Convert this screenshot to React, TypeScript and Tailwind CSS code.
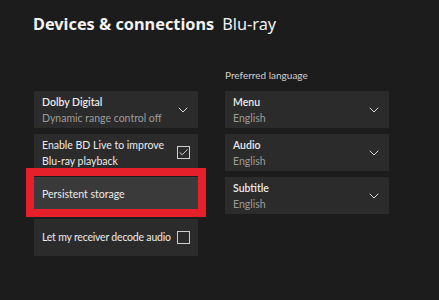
import { ChevronDown, Check } from 'lucide-react';

const font = { fontFamily: '"Noto Sans", "Open Sans", sans-serif' };
const body = { fontFamily: 'Lato, "Noto Sans", sans-serif' };

function Chevron() {
  return <ChevronDown className="h-4 w-4 text-[#d8d8d8]" strokeWidth={1.5} />;
}

function Box({ checked }: { checked: boolean }) {
  return (
    <div className="flex h-[13px] w-[13px] items-center justify-center border border-[#cfcfcf]">
      {checked && <Check className="h-[11px] w-[11px] text-[#e0e0e0]" strokeWidth={2} />}
    </div>
  );
}

function Select({ label, value }: { label: string; value: string }) {
  return (
    <div className="flex h-[37px] items-center justify-between bg-[#2b2b2b] pl-2 pr-[7px]">
      <div className="flex flex-col leading-[16px]">
        <span className="text-[10.5px] font-semibold text-[#ececec]">{label}</span>
        <span className="text-[10.5px] text-[#9c9c9c]">{value}</span>
      </div>
      <Chevron />
    </div>
  );
}

export default function App() {
  return (
    <div className="relative h-[300px] w-[439px] overflow-hidden bg-[#1c1c1c]" style={body}>
      <div
        className="flex items-baseline gap-[8px] pl-[33px] pt-[12px] text-[16.3px] leading-[24px] text-[#f2f2f2]"
        style={font}
      >
        <span className="font-bold">Devices &amp; connections</span>
        <span className="font-normal">Blu-ray</span>
      </div>

      <div className="mt-[55px] flex pl-[34px]">
        {/* left column */}
        <div className="flex w-[164px] flex-col gap-[6px]">
          <Select label="Dolby Digital" value="Dynamic range control off" />
          <div className="flex h-[37px] items-center justify-between bg-[#2b2b2b] pl-2 pr-[8px]">
            <span className="text-[10.5px] leading-[16px] text-[#ececec]">
              Enable BD Live to improve
              <br />
              Blu-ray playback
            </span>
            <Box checked />
          </div>
          <div className="flex h-[36px] items-center bg-[#3a3a3a] pl-2">
            <span className="text-[10.5px] text-[#ececec]">Persistent storage</span>
          </div>
          <div className="flex h-[37px] items-center justify-between bg-[#2b2b2b] pl-2 pr-[8px]">
            <span className="whitespace-nowrap text-[10.5px] tracking-[-0.2px] text-[#ececec]">
              Let my receiver decode audio
            </span>
            <Box checked={false} />
          </div>
        </div>

        {/* right column */}
        <div className="ml-[27px] w-[164px]">
          <div className="-mt-[23px] mb-[8px] text-[10px] leading-[15px] text-[#d0d0d0]">
            Preferred language
          </div>
          <div className="flex flex-col gap-[6px]">
            <Select label="Menu" value="English" />
            <Select label="Audio" value="English" />
            <Select label="Subtitle" value="English" />
          </div>
        </div>
      </div>

      {/* highlight annotation */}
      <div className="pointer-events-none absolute left-[26px] top-[168px] h-[49px] w-[180px] border-[8px] border-[#e5202b]" />
    </div>
  );
}
